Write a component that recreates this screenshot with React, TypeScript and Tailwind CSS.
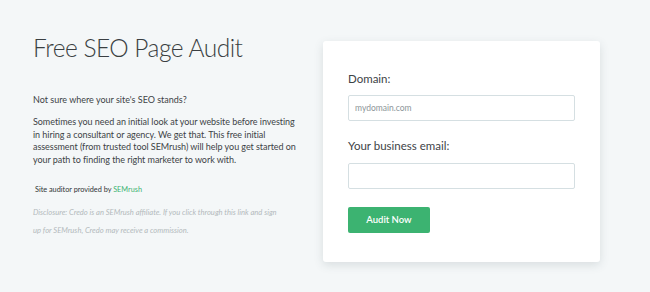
import React from 'react';

export default function App() {
  return (
    <div className="w-[650px] h-[292px] bg-[#f4f7f8] flex font-['Lato',sans-serif] text-[#3d4346]">
      <div className="w-[290px] pl-[33px] pt-[31px]">
        <h1 className="text-[24.5px] font-light leading-[34px] tracking-[-0.5px] text-[#3a3f42]">Free SEO Page Audit</h1>
        <p className="mt-[29px] text-[9px] leading-[12px]">Not sure where your site's SEO stands?</p>
        <p className="mt-[10px] text-[9px] leading-[12.5px] w-[268px] tracking-[-0.05px]">
          Sometimes you need an initial look at your website before investing in hiring a consultant or agency. We get that. This free initial assessment (from trusted tool SEMrush) will help you get started on your path to finding the right marketer to work with.
        </p>
        <p className="mt-[19px] ml-[2px] text-[7.3px] leading-[10px] text-[#2f3437]">
          Site auditor provided by <span className="text-[#3cb371]">SEMrush</span>
        </p>
        <p className="mt-[8px] text-[7.6px] leading-[18px] italic text-[#b3b9bc] w-[252px]">
          Disclosure: Credo is an SEMrush affiliate. If you click through this link and sign up for SEMrush, Credo may receive a commission.
        </p>
      </div>
      <div className="mt-[41px] ml-[33px] w-[277px] h-[221px] bg-white rounded-[3px] shadow-[0_3px_10px_rgba(60,80,90,0.15)] px-[25px] pt-[30px]">
        <label className="block text-[11.5px] leading-[16px] text-[#3d4346]">Domain:</label>
        <input
          className="mt-[8px] block w-[227px] h-[26px] border border-[#d5dfe2] rounded-[2px] px-[6px] text-[8.5px] text-[#3d4346] outline-none placeholder:text-[#8d9599]"
          placeholder="mydomain.com"
        />
        <label className="block mt-[17px] text-[11.5px] leading-[16px] text-[#3d4346]">Your business email:</label>
        <input className="mt-[9px] block w-[227px] h-[26px] border border-[#d5dfe2] rounded-[2px] px-[6px] text-[8.5px] outline-none" />
        <button className="mt-[18px] block w-[82px] h-[26px] bg-[#3cb371] rounded-[2px] text-white text-[9.5px] font-semibold">
          Audit Now
        </button>
      </div>
    </div>
  );
}
